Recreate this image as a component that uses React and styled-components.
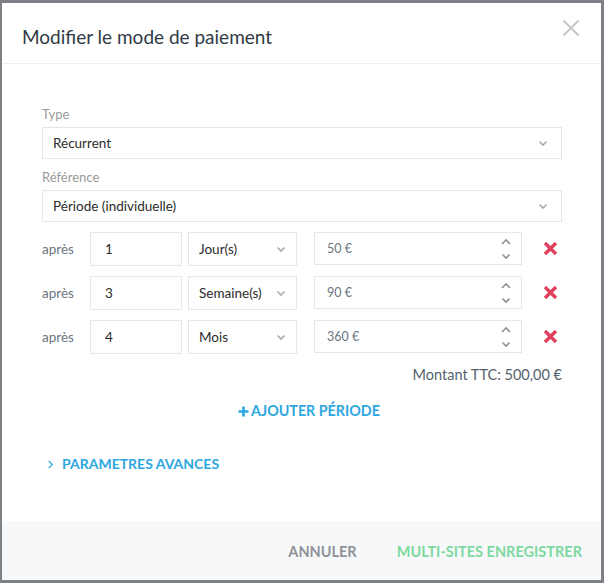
import React from "react";
import styled, { createGlobalStyle } from "styled-components";

const Global = createGlobalStyle`
  html, body { margin: 0; padding: 0; }
  body {
    background: #7d8186;
    font-family: Lato, "Liberation Sans", sans-serif;
    -webkit-font-smoothing: antialiased;
  }
  #root { padding: 3px 3px 3px 2px; box-sizing: border-box; height: 583px; }
  * { box-sizing: border-box; }
`;

const Modal = styled.div`
  background: #fff;
  height: 577px;
  display: flex;
  flex-direction: column;
`;

const Header = styled.div`
  height: 61px;
  border-bottom: 1px solid #eceef0;
  display: flex;
  align-items: center;
  justify-content: space-between;
  padding: 0 21px 0 20px;
  flex-shrink: 0;
`;

const Title = styled.h2`
  margin: 0;
  font-size: 19px;
  font-weight: 400;
  color: #2f3a45;
  padding-top: 7px;
`;

const CloseBtn = styled.button`
  border: 0;
  background: none;
  padding: 0;
  width: 18px;
  height: 18px;
  display: flex;
  margin-top: -10px;
`;

const Body = styled.div`
  flex: 1;
  padding: 40px 39px 0 40px;
  display: flex;
  flex-direction: column;
`;

const Field = styled.div`
  display: flex;
  flex-direction: column;
  gap: 3px;
  margin-top: ${(p) => p.$mt || 0}px;
`;

const Label = styled.label`
  font-size: 13px;
  line-height: 20px;
  color: #9a9a9a;
`;

const SelectBox = styled.div`
  height: ${(p) => p.$h || 32}px;
  width: ${(p) => (p.$w ? p.$w + "px" : "auto")};
  border: 1px solid #e4e7ea;
  display: flex;
  align-items: center;
  justify-content: space-between;
  padding: 0 ${(p) => p.$pr || 11}px 0 10px;
  font-size: 13.5px;
  color: #2b2b2b;
  margin-left: ${(p) => p.$ml || 0}px;
  flex-shrink: 0;
`;

const Rows = styled.div`
  margin-top: 10px;
  display: flex;
  flex-direction: column;
  gap: 11px;
`;

const Row = styled.div`
  display: flex;
  align-items: center;
  height: 33px;
`;

const After = styled.span`
  width: 48px;
  font-size: 13.5px;
  color: #6b7580;
`;

const NumInput = styled.div`
  width: 92px;
  height: 34px;
  border: 1px solid #e4e7ea;
  display: flex;
  align-items: center;
  padding-left: 14px;
  font-size: 13.5px;
  color: #2b2b2b;
`;

const Amount = styled.div`
  width: 208px;
  height: 33px;
  margin-left: 17px;
  border: 1px solid #e4e7ea;
  display: flex;
  align-items: center;
  justify-content: space-between;
  padding: 0 10px 0 12px;
  font-size: 12.5px;
  color: #6b7580;
`;

const Spinner = styled.div`
  display: flex;
  flex-direction: column;
  gap: 4px;
  margin-top: 1px;
`;

const DeleteBtn = styled.button`
  border: 0;
  background: none;
  padding: 0;
  margin-left: 22px;
  width: 13px;
  height: 13px;
  display: flex;
`;

const Total = styled.div`
  margin-top: 12px;
  text-align: right;
  font-size: 14.5px;
  line-height: 20px;
  color: #56626d;
`;

const AddLink = styled.button`
  margin: 16px auto 0;
  border: 0;
  background: none;
  padding: 0 0 0 14px;
  display: flex;
  align-items: center;
  gap: 2px;
  font-family: inherit;
  font-size: 14.3px;
  font-weight: 700;
  color: #2da7df;
  text-transform: uppercase;
  line-height: 20px;
`;

const Advanced = styled.button`
  margin-top: 33px;
  border: 0;
  background: none;
  padding: 0 0 0 4px;
  display: flex;
  align-items: center;
  gap: 7px;
  font-family: inherit;
  font-size: 14px;
  font-weight: 700;
  color: #2da7df;
  line-height: 20px;
  text-transform: uppercase;
  align-self: flex-start;
`;

const Footer = styled.div`
  height: 59px;
  background: #f7f8fa;
  display: flex;
  align-items: center;
  justify-content: flex-end;
  gap: 40px;
  padding: 2px 19px 0 0;
  flex-shrink: 0;
`;

const FooterBtn = styled.button`
  border: 0;
  background: none;
  padding: 0;
  font-family: inherit;
  font-size: 14.5px;
  font-weight: 700;
  text-transform: uppercase;
  color: ${(p) => p.$color};
`;

const Chevron = ({ size = 10, color = "#9aa0a6", dir = "down" }) => {
  const d =
    dir === "down"
      ? "M1.5 3.5 L5 7 L8.5 3.5"
      : dir === "up"
      ? "M1 7 L5 3 L9 7"
      : "M3 1 L7 5 L3 9";
  return (
    <svg width={size} height={size} viewBox="0 0 10 10">
      <path d={d} fill="none" stroke={color} strokeWidth={dir === "right" ? 1.4 : 1.6} />
    </svg>
  );
};

const RedX = () => (
  <svg width="13" height="13" viewBox="0 0 13 13">
    <path d="M2.2 2.2 L10.8 10.8 M10.8 2.2 L2.2 10.8" stroke="#e0405e" strokeWidth="3.4" strokeLinecap="square" />
  </svg>
);

const rows = [
  { n: "1", unit: "Jour(s)", amount: "50 €" },
  { n: "3", unit: "Semaine(s)", amount: "90 €" },
  { n: "4", unit: "Mois", amount: "360 €" },
];

export default function App() {
  return (
    <>
      <Global />
      <Modal>
        <Header>
          <Title>Modifier le mode de paiement</Title>
          <CloseBtn aria-label="Fermer">
            <svg width="18" height="18" viewBox="0 0 18 18">
              <path d="M1.5 1.5 L16.5 16.5 M16.5 1.5 L1.5 16.5" stroke="#c6c6c6" strokeWidth="2" />
            </svg>
          </CloseBtn>
        </Header>
        <Body>
          <Field>
            <Label>Type</Label>
            <SelectBox $pr={13}>
              <span>Récurrent</span>
              <Chevron color="#a8adb2" />
            </SelectBox>
          </Field>
          <Field $mt={8}>
            <Label>Référence</Label>
            <SelectBox $pr={13}>
              <span>Période (individuelle)</span>
              <Chevron color="#a8adb2" />
            </SelectBox>
          </Field>
          <Rows>
            {rows.map((r) => (
              <Row key={r.n}>
                <After>après</After>
                <NumInput>{r.n}</NumInput>
                <SelectBox $w={109} $h={34} $ml={6} $pr={10}>
                  <span>{r.unit}</span>
                  <Chevron color="#a8adb2" />
                </SelectBox>
                <Amount>
                  <span>{r.amount}</span>
                  <Spinner>
                    <Chevron dir="up" color="#8a9199" size={10} />
                    <Chevron dir="down" color="#8a9199" size={10} />
                  </Spinner>
                </Amount>
                <DeleteBtn aria-label="Supprimer">
                  <RedX />
                </DeleteBtn>
              </Row>
            ))}
          </Rows>
          <Total>Montant TTC: 500,00 €</Total>
          <AddLink>
            <svg width="11" height="11" viewBox="0 0 11 11">
              <path d="M5.5 0.5 V10.5 M0.5 5.5 H10.5" stroke="#2da7df" strokeWidth="2.6" />
            </svg>
            Ajouter période
          </AddLink>
          <Advanced>
            <Chevron dir="right" color="#2da7df" size={9} />
            Parametres avances
          </Advanced>
        </Body>
        <Footer>
          <FooterBtn $color="#8f9296">Annuler</FooterBtn>
          <FooterBtn $color="#7dd9a0">Multi-sites enregistrer</FooterBtn>
        </Footer>
      </Modal>
    </>
  );
}
